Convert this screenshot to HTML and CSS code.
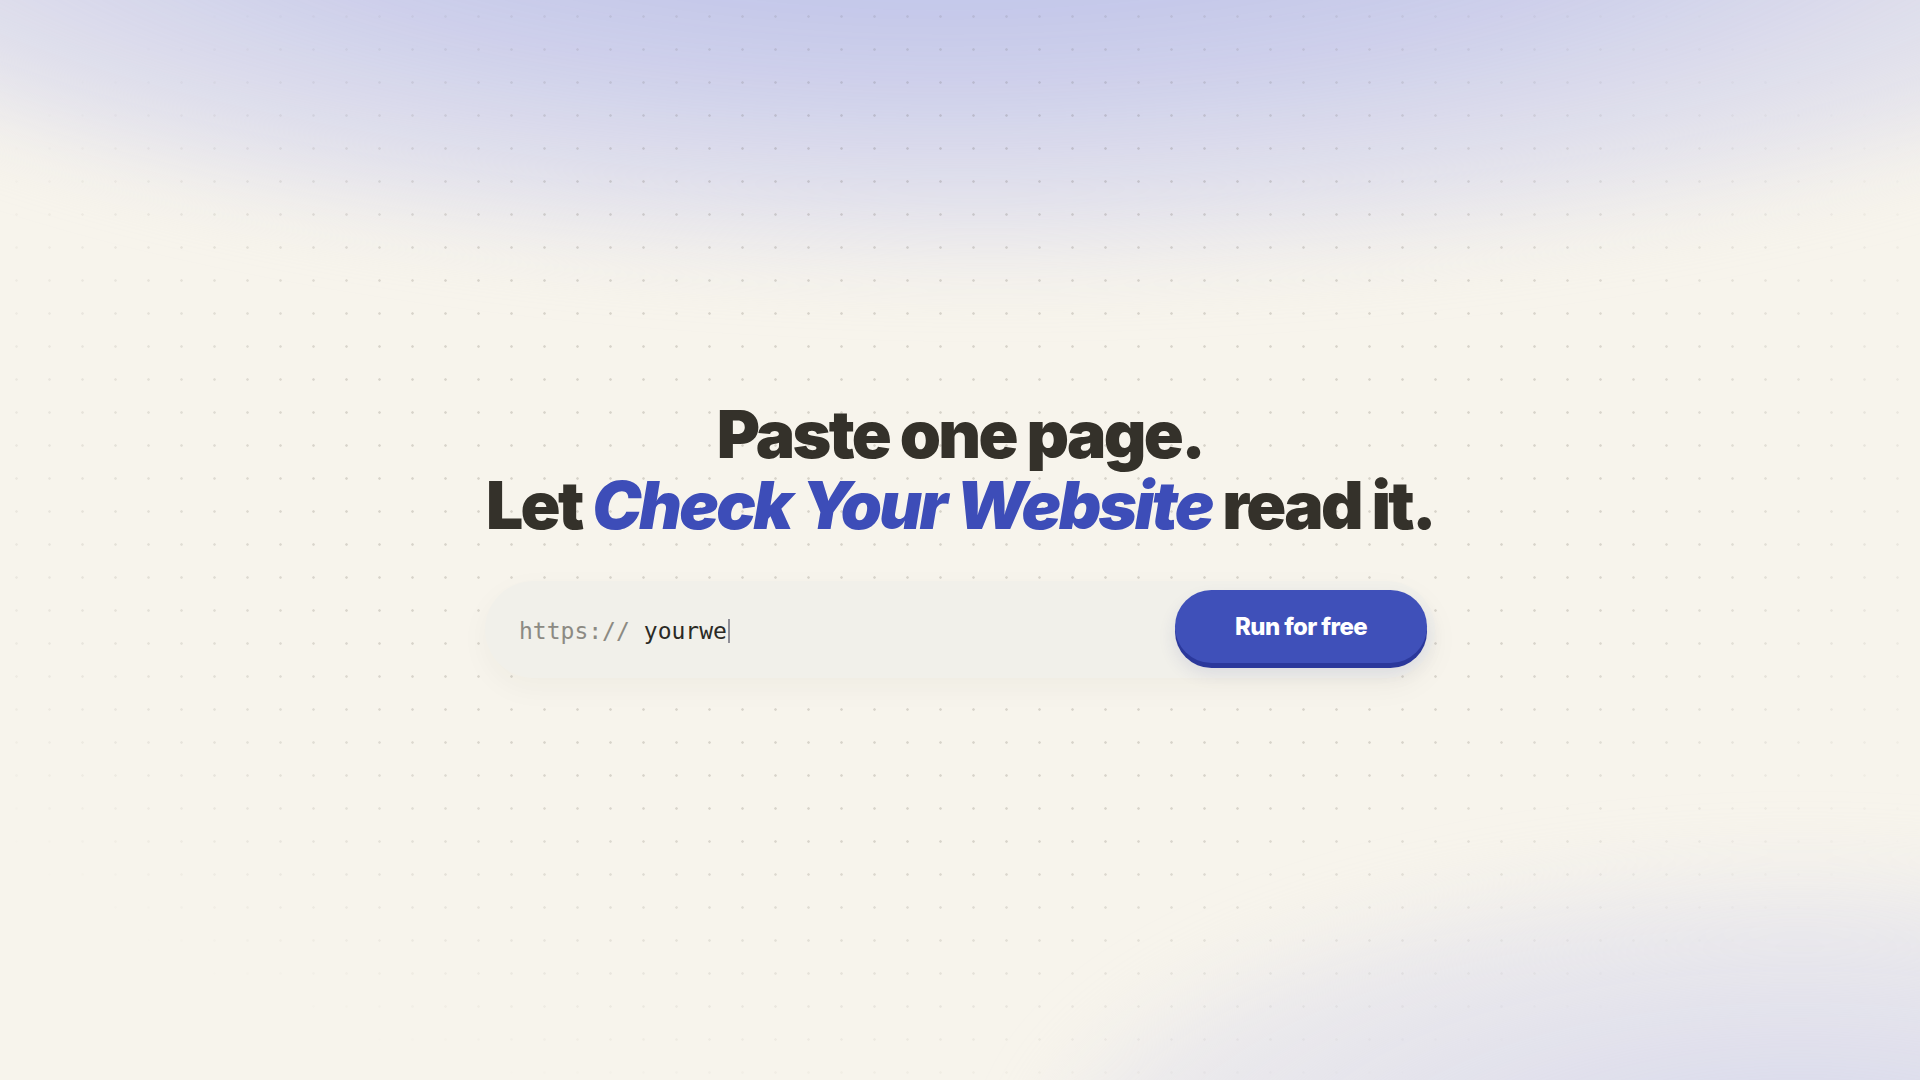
FILE: index.html
```html
<!DOCTYPE html>
<html lang="en">
<head>
<meta charset="utf-8">
<title>Check Your Website</title>
<link rel="stylesheet" href="styles.css">
</head>
<body>
<div class="bg">
  <div class="blob blob-top"></div>
  <div class="blob blob-bottom"></div>
  <div class="dots"></div>
</div>
<main class="hero">
  <h1 class="title">
    <span class="line">Paste one page.</span>
    <span class="line">Let <em class="brand">Check Your Website</em> read it.</span>
  </h1>
  <form class="url-form">
    <div class="url-field">
      <span class="prefix">https://</span>
      <span class="typed">yourwe</span><span class="caret"></span>
    </div>
    <button type="button" class="run-btn">Run for free</button>
  </form>
</main>
</body>
</html>
```
FILE: styles.css
```css
* { box-sizing: border-box; }
html, body { margin: 0; padding: 0; }
body {
  width: 100%;
  height: 100vh;
  overflow: hidden;
  background: #f7f4ec;
  font-family: Inter, "Liberation Sans", sans-serif;
  position: relative;
}
.bg {
  position: absolute;
  inset: 0;
  overflow: hidden;
  z-index: 0;
}
.blob {
  position: absolute;
  border-radius: 50%;
  filter: blur(40px);
}
.blob-top {
  left: -300px;
  top: -520px;
  width: 2600px;
  height: 770px;
  background: radial-gradient(ellipse at 48% 50%, rgba(186,190,232,1) 0%, rgba(198,201,234,0.95) 35%, rgba(220,220,236,0.75) 62%, rgba(247,244,236,0) 100%);
}
.blob-bottom {
  left: 1050px;
  top: 880px;
  width: 1500px;
  height: 600px;
  background: radial-gradient(ellipse at 50% 50%, rgba(212,213,236,1) 0%, rgba(222,222,236,0.8) 40%, rgba(247,244,236,0) 100%);
}
.dots {
  position: absolute;
  inset: 0;
  background-image: radial-gradient(circle at center, rgba(60,55,40,0.17) 0.9px, rgba(60,55,40,0) 1.6px);
  background-size: 33px 33px;
  background-position: 0 0;
  -webkit-mask-image: radial-gradient(ellipse 60% 60% at 50% 45%, #000 55%, transparent 100%);
  mask-image: radial-gradient(ellipse 60% 60% at 50% 45%, #000 55%, transparent 100%);
}
.hero {
  position: relative;
  z-index: 1;
  height: 100vh;
  display: flex;
  flex-direction: column;
  align-items: center;
  justify-content: center;
  padding-bottom: 4px;
}
.title {
  margin: 0;
  display: flex;
  flex-direction: column;
  align-items: center;
  font-family: Inter, "Liberation Sans", sans-serif;
  font-weight: 900;
  font-size: 66px;
  line-height: 71px;
  letter-spacing: -0.04em;
  color: #34312a;
}
.line { display: block; white-space: nowrap; }
.brand {
  font-style: italic;
  color: #3d4db8;
}
.url-form {
  margin-top: 40px;
  width: 950px;
  height: 97px;
  padding: 9px 8px 10px 34px;
  display: flex;
  align-items: center;
  justify-content: space-between;
  background: #f1f0ea;
  border-radius: 49px;
  box-shadow: 0 10px 30px rgba(60, 50, 30, 0.04);
}
.url-field {
  display: flex;
  align-items: center;
  font-family: "DejaVu Sans Mono", "Liberation Mono", monospace;
  font-size: 23px;
  letter-spacing: 0;
  padding-top: 4px;
}
.prefix { color: #8c8a83; margin-right: 14px; }
.typed { color: #2b2a25; }
.caret {
  display: inline-block;
  width: 2px;
  height: 24px;
  margin-left: 1px;
  background: #8f8e96;
}
.run-btn {
  width: 252px;
  height: 73px;
  margin-bottom: 5px;
  border: 0;
  border-radius: 37px;
  background: #3f50b9;
  color: #ffffff;
  font-family: Inter, "Liberation Sans", sans-serif;
  font-weight: 800;
  font-size: 24px;
  letter-spacing: -0.025em;
  box-shadow: 0 5px 0 #2b389b, 0 10px 18px rgba(40, 50, 140, 0.12);
  cursor: pointer;
}
```
